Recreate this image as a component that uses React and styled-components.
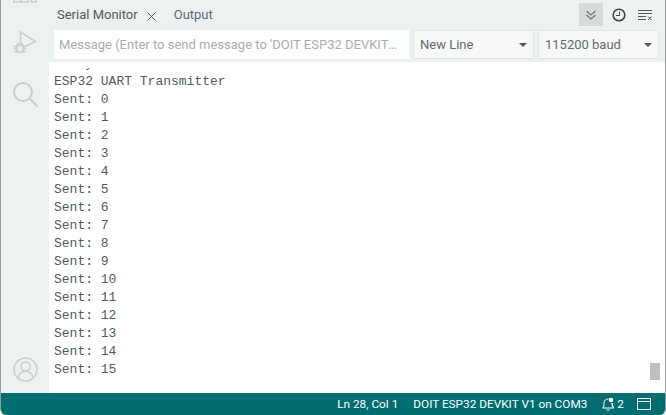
import React from "react";
import styled, { createGlobalStyle } from "styled-components";

const GlobalStyle = createGlobalStyle`
  html, body {
    margin: 0;
    padding: 0;
    background: #ffffff;
  }
  * { box-sizing: border-box; }
`;

const Window = styled.div`
  width: 666px;
  height: 415px;
  display: flex;
  flex-direction: column;
  overflow: hidden;
  background: #ecf1f1;
  border-left: 1px solid #9a9a9a;
  border-right: 1px solid #9a9a9a;
  border-radius: 0 0 6px 6px;
  font-family: "Liberation Sans", Arial, sans-serif;
`;

const Body = styled.div`
  flex: 1;
  min-height: 0;
  display: flex;
`;

const ActivityBar = styled.div`
  width: 48px;
  flex: none;
  display: flex;
  flex-direction: column;
  align-items: center;
  overflow: hidden;
  padding-bottom: 11px;
`;

const BarIcon = styled.svg`
  flex: none;
  display: block;
  margin-top: ${(p) => (p.$top === undefined ? "auto" : `${p.$top}px`)};
  fill: none;
  stroke: #c8cdcd;
  stroke-width: ${(p) => p.$stroke || 1.5};
`;

const Main = styled.div`
  flex: 1;
  min-width: 0;
  display: flex;
  flex-direction: column;
`;

const TabBar = styled.div`
  height: 29px;
  flex: none;
  display: flex;
  align-items: center;
  padding: 0 13px 0 8px;
`;

const Tab = styled.div`
  font-family: Roboto, Arial, sans-serif;
  font-size: 13px;
  line-height: 29px;
  color: ${(p) => (p.$active ? "#4e5b61" : "#5c6a70")};
`;

const CloseIcon = styled.svg`
  margin: 3px 18px 0 9px;
  stroke: #4e5b61;
  stroke-width: 1;
  fill: none;
`;

const TabTools = styled.div`
  margin-left: auto;
  display: flex;
  align-items: center;
`;

const ToolButton = styled.div`
  width: 24px;
  height: 23px;
  margin-right: 9px;
  display: flex;
  align-items: center;
  justify-content: center;
  background: #d7dbdb;
`;

const ToolIcon = styled.svg`
  display: block;
  margin-right: ${(p) => p.$right || 0}px;
  fill: none;
`;

const InputRow = styled.div`
  height: 33px;
  flex: none;
  display: flex;
  gap: 4px;
  padding: 1px 6px 3px 5px;
`;

const MessageInput = styled.div`
  flex: 1;
  min-width: 0;
  background: #ffffff;
  font-family: Roboto, Arial, sans-serif;
  font-size: 13px;
  line-height: 29px;
  padding: 0 9px 0 5px;
  color: #a8aeb0;
  white-space: nowrap;
  overflow: hidden;
  text-overflow: ellipsis;
`;

const Select = styled.div`
  width: ${(p) => p.$width}px;
  flex: none;
  display: flex;
  align-items: center;
  justify-content: space-between;
  padding: 0 6px;
  background: #f7f9f9;
  border: 1px solid #e2e7e7;
  font-family: Roboto, Arial, sans-serif;
  font-size: 13px;
  color: #5c6a70;
`;

const Caret = styled.span`
  width: 0;
  height: 0;
  border-left: 4px solid transparent;
  border-right: 4px solid transparent;
  border-top: 4px solid #4e5b61;
`;

const Output = styled.div`
  position: relative;
  flex: 1;
  min-height: 0;
  padding-top: 6px;
  background: #ffffff;
  display: flex;
`;

const LogViewport = styled.div`
  flex: 1;
  min-width: 0;
  overflow: hidden;
`;

const Log = styled.div`
  margin-top: -13px;
  padding-left: 5px;
  font-family: "Liberation Mono", "Courier New", monospace;
  font-size: 13px;
  line-height: 18px;
  color: #4e5b61;
  white-space: pre;
`;

const ScrollThumb = styled.div`
  position: absolute;
  right: 5px;
  top: 301px;
  width: 10px;
  height: 17px;
  background: #bfbfbf;
`;

const StatusBar = styled.div`
  height: 22px;
  flex: none;
  display: flex;
  align-items: center;
  justify-content: flex-end;
  padding-right: 14px;
  background: #006d70;
  color: #ffffff;
  font-family: Roboto, Arial, sans-serif;
  font-size: 11.8px;
`;

const StatusItem = styled.span`
  display: flex;
  align-items: center;
  gap: 2px;
  margin-left: ${(p) => p.$gap || 0}px;
`;

const lines = [
  "entry 0x400805e4",
  "ESP32 UART Transmitter",
  ...Array.from({ length: 16 }, (_, i) => `Sent: ${i}`),
];

const App = () => {
  return (
    <>
      <GlobalStyle />
      <Window>
        <Body>
          <ActivityBar>
            <BarIcon width="24" height="22" viewBox="0 0 24 22" $top={-19}>
              <rect x="1" y="1" width="14" height="20" />
              <path d="M8 1v20M1 14h14M18 14h5v7h-5z" />
            </BarIcon>
            <BarIcon width="24" height="22" viewBox="0 0 24 22" $top={28}>
              <path d="M7.500 12V1l15 9.500-10 5" />
              <path
                d="M4 14.500h6v6.500H4zM1 15l3 1.500M1 21l3-1.500M13 15l-3 1.500M13 21l-3-1.500M.5 18h3M10 18h3.500M5 14.500v-2h4v2"
                strokeWidth="1.6"
              />
            </BarIcon>
            <BarIcon width="25" height="25" viewBox="0 0 25 25" $top={29} $stroke={2}>
              <circle cx="10" cy="10" r="9" />
              <path d="M16.500 16.500l8 8" />
            </BarIcon>
            <BarIcon width="25" height="25" viewBox="0 0 25 25">
              <circle cx="12.500" cy="12.500" r="11.500" />
              <circle cx="12.500" cy="9.500" r="4.500" />
              <path d="M5 20.500c1-5 4-6 7.500-6s6.500 1 7.500 6" />
            </BarIcon>
          </ActivityBar>
          <Main>
            <TabBar>
              <Tab $active>Serial Monitor</Tab>
              <CloseIcon width="9" height="9" viewBox="0 0 9 9">
                <path d="M.5.500l8 8M8.500.500l-8 8" />
              </CloseIcon>
              <Tab>Output</Tab>
              <TabTools>
                <ToolButton>
                  <svg width="12" height="12" viewBox="0 0 12 12" fill="none" stroke="#6b777c" strokeWidth="1.2">
                    <path d="M1.500 2l4.500 4 4.500-4M1.500 6l4.500 4 4.500-4" />
                  </svg>
                </ToolButton>
                <ToolIcon width="14" height="14" viewBox="0 0 14 14" stroke="#37474f" strokeWidth="1.6" $right={12}>
                  <circle cx="7" cy="7" r="5.800" />
                  <path d="M7.500 3.500V7.500H4" strokeWidth="1" />
                </ToolIcon>
                <ToolIcon width="14" height="12" viewBox="0 0 14 12" stroke="#4e5b61" strokeWidth="1">
                  <path d="M0 1.500h14M0 4.500h14M0 7.500h8M0 10.500h8M10 7.500l3.500 3.500M13.500 7.500l-3.500 3.500" />
                </ToolIcon>
              </TabTools>
            </TabBar>
            <InputRow>
              <MessageInput>Message (Enter to send message to 'DOIT ESP32 DEVKIT V1' on 'COM3')</MessageInput>
              <Select $width={121}>
                New Line
                <Caret />
              </Select>
              <Select $width={121}>
                115200 baud
                <Caret />
              </Select>
            </InputRow>
            <Output>
              <LogViewport>
                <Log>
                  {lines.map((line) => (
                    <div key={line}>{line}</div>
                  ))}
                </Log>
              </LogViewport>
              <ScrollThumb />
            </Output>
          </Main>
        </Body>
        <StatusBar>
          <StatusItem>Ln 28, Col 1</StatusItem>
          <StatusItem $gap={15}>DOIT ESP32 DEVKIT V1 on COM3</StatusItem>
          <StatusItem $gap={14}>
            <svg width="14" height="14" viewBox="0 0 14 14" fill="none" stroke="#fff" strokeWidth="1">
              <path d="M1.500 11c1.500-1 1.500-2.500 1.500-5a4 4 0 0 1 4.500-4M11 6c0 2.500 0 4 1.500 5zM1.500 11h11M5.500 12.500c.5 1 2.500 1 3 0" />
              <circle cx="10" cy="3" r="2.300" fill="#fff" stroke="none" />
            </svg>
            2
          </StatusItem>
          <StatusItem $gap={13}>
            <svg width="14" height="12" viewBox="0 0 14 12" fill="none" stroke="#fff" strokeWidth="1">
              <rect x=".5" y=".5" width="13" height="11" />
              <path d="M.5 3.500h13" strokeWidth="1" />
            </svg>
          </StatusItem>
        </StatusBar>
      </Window>
    </>
  );
};

export default App;
